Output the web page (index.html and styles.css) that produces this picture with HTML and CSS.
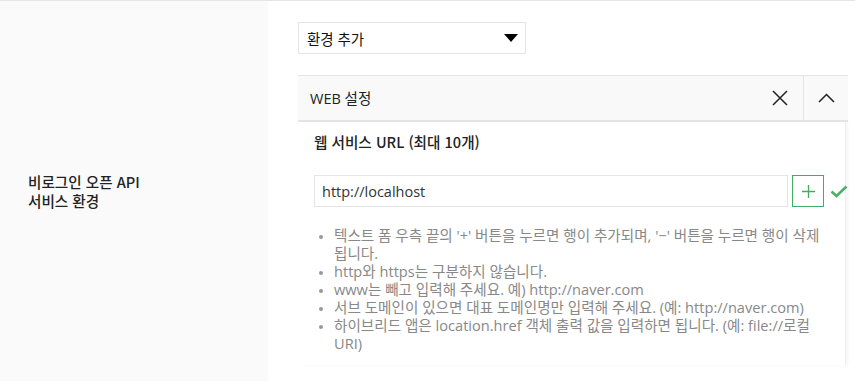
FILE: index.html
```html
<!DOCTYPE html>
<html lang="ko">
<head>
  <meta charset="UTF-8" />
  <meta name="viewport" content="width=device-width, initial-scale=1.0" />
  <title>서비스 환경</title>
  <link rel="stylesheet" href="styles.css">
</head>
<body>

  <!-- === 서비스 환경 행 === -->
  <div class="env-row">
    <div class="env-label">비로그인 오픈 API<br>서비스 환경</div>

    <div class="env-cell">
      <div class="select-box">
        <span>환경 추가</span>
        <svg class="select-arrow" width="14" height="8" viewBox="0 0 14 8"><path d="M0 0H14L7 8Z" fill="#000"/></svg>
      </div>

      <!-- === WEB 설정 패널 === -->
      <div class="panel">
        <div class="panel-head">
          <span class="panel-title">WEB 설정</span>
          <button class="head-btn">
            <svg width="16" height="16" viewBox="0 0 16 16"><path d="M1 1L15 15M15 1L1 15" stroke="#222" stroke-width="1.5" fill="none"/></svg>
          </button>
          <button class="head-btn divided">
            <svg width="17" height="10" viewBox="0 0 17 10"><path d="M1 9L8.5 1.5L16 9" stroke="#222" stroke-width="1.5" fill="none"/></svg>
          </button>
        </div>

        <div class="panel-body">
          <h3 class="field-title">웹 서비스 URL (최대 10개)</h3>

          <div class="url-row">
            <input class="url-input" type="text" value="http://localhost" />
            <button class="add-btn">
              <svg width="13" height="13" viewBox="0 0 13 13"><path d="M6.5 0V13M0 6.5H13" stroke="#3fae62" stroke-width="1.3" fill="none"/></svg>
            </button>
            <svg class="ok-mark" width="18" height="13" viewBox="0 0 18 13"><path d="M1.5 6.5L6.5 11L16.5 1.5" stroke="#4caf6a" stroke-width="2.6" fill="none"/></svg>
          </div>

          <ul class="help-list">
            <li>텍스트 폼 우측 끝의 '+' 버튼을 누르면 행이 추가되며, '−' 버튼을 누르면 행이 삭제 됩니다.</li>
            <li>http와 https는 구분하지 않습니다.</li>
            <li>www는 빼고 입력해 주세요. 예) http://naver.com</li>
            <li>서브 도메인이 있으면 대표 도메인명만 입력해 주세요. (예: http://naver.com)</li>
            <li>하이브리드 앱은 location.href 객체 출력 값을 입력하면 됩니다. (예: file://로컬 URI)</li>
          </ul>
        </div>
      </div>
    </div>
  </div>

</body>
</html>
```

FILE: styles.css
```css
* {
  margin: 0;
  padding: 0;
  box-sizing: border-box;
}

body {
  font-family: "Open Sans", "Noto Sans CJK KR", sans-serif;
  font-size: 14.5px;
  color: #333;
  background: #fff;
  border-top: 1px solid #e5e5e5;
}

.env-row {
  display: flex;
  align-items: stretch;
}

.env-label {
  width: 268px;
  flex-shrink: 0;
  background: #fafafa;
  padding-left: 28px;
  display: flex;
  align-items: center;
  font-family: "Noto Sans CJK KR", sans-serif;
  font-size: 14.6px;
  font-weight: 500;
  line-height: 19px;
  color: #222;
}

.env-cell {
  flex: 1;
  padding: 21px 7px 16px 30px;
}

.select-box {
  width: 228px;
  height: 32px;
  border: 1px solid #e5e5e5;
  display: flex;
  align-items: center;
  justify-content: space-between;
  padding: 0 7px 0 8px;
  color: #111;
}

.panel {
  margin-top: 21px;
  width: 550px;
}

.panel-head {
  display: flex;
  align-items: stretch;
  height: 47px;
  background: #f9f9f9;
  border-top: 1px solid #e5e5e5;
  border-bottom: 2px solid #e5e5e5;
}

.panel-title {
  flex: 1;
  display: flex;
  align-items: center;
  padding: 0 0 2px 12px;
  color: #222;
}

.head-btn {
  width: 46px;
  border: none;
  background: none;
  display: flex;
  align-items: center;
  justify-content: center;
}

.head-btn.divided {
  width: 45px;
  border-left: 1px solid #e5e5e5;
}

.panel-body {
  width: 548px;
  border-right: 1px solid #eee;
  box-shadow: 2px 0 3px rgba(0, 0, 0, 0.04);
  padding: 10px 0 13px 16px;
}

.field-title {
  font-family: "Noto Sans CJK KR", sans-serif;
  font-size: 14.6px;
  font-weight: 500;
  line-height: 20px;
  color: #222;
}

.url-row {
  display: flex;
  align-items: center;
  margin-top: 23px;
}

.url-input {
  width: 474px;
  height: 32px;
  flex-shrink: 0;
  border: 1px solid #e5e5e5;
  padding: 0 7px;
  font-family: "Open Sans", "Noto Sans CJK KR", sans-serif;
  font-size: 14.5px;
  color: #333;
  outline: none;
}

.add-btn {
  width: 32px;
  height: 32px;
  flex-shrink: 0;
  margin-left: 4px;
  border: 1px solid #3fae62;
  background: #fff;
  display: flex;
  align-items: center;
  justify-content: center;
}

.ok-mark {
  margin-left: 6px;
  flex-shrink: 0;
}

.help-list {
  margin-top: 19px;
  padding-left: 20px;
  padding-right: 14px;
  font-size: 14.6px;
  color: #888;
  line-height: 18px;
  word-break: keep-all;
}

.help-list li::marker {
  font-size: 12px;
  color: #999;
}
```
